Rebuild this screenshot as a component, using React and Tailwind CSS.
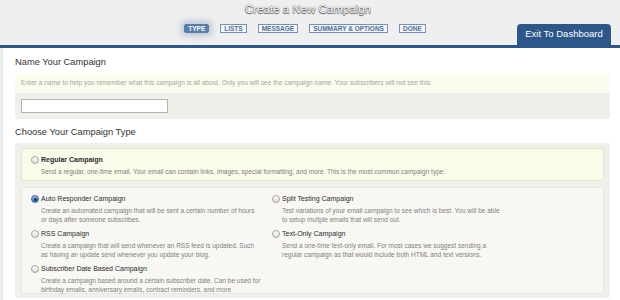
const font = { fontFamily: '"Liberation Sans", Arial, sans-serif' };

const tabs = ['TYPE', 'LISTS', 'MESSAGE', 'SUMMARY & OPTIONS', 'DONE'];

function Radio({ checked }) {
  if (checked) {
    return (
      <span className="mt-[1px] mr-[2px] flex h-[8px] w-[8px] shrink-0 items-center justify-center rounded-full border border-[#3f6aa6] bg-gradient-to-b from-[#8db5ea] to-[#3d78c9]">
        <span className="h-[3px] w-[3px] rounded-full bg-[#17335e]" />
      </span>
    );
  }
  return (
    <span className="mt-[1px] mr-[2px] h-[8px] w-[8px] shrink-0 rounded-full border border-[#a3a3a3] bg-gradient-to-b from-white to-[#dcdcdc]" />
  );
}

function Option({ title, lines, checked, bold }) {
  return (
    <div className="flex items-start">
      <Radio checked={checked} />
      <div>
        <div className={`text-[7px] leading-[10px] text-[#2b2b2b] ${bold ? 'font-bold' : ''}`}>{title}</div>
        <div className="mt-[2px] text-[6.5px] leading-[9px] text-[#7f7f7f]">
          {lines.map((l) => (
            <div key={l} className="whitespace-nowrap">{l}</div>
          ))}
        </div>
      </div>
    </div>
  );
}

export default function App() {
  return (
    <div className="w-[620px] h-[300px] overflow-hidden bg-white" style={font}>
      <div className="flex h-[45px] flex-col bg-[#efefef]">
        <div className="flex h-[20px] items-center justify-center pr-[4px]">
          <span className="text-[11.5px] text-white [text-shadow:0_1px_1px_#444,0_0_1px_#222]">
            Create a New Campaign
          </span>
        </div>
        <div className="relative flex flex-1 items-start justify-center pt-[4px] pr-[10px]">
          <div className="flex gap-[11px]">
            {tabs.map((t, i) => (
              <span
                key={t}
                className={
                  i === 0
                    ? 'flex h-[9px] items-center rounded-[2px] border border-[#5a7eaa] bg-[#5a7eaa] px-[3px] text-[6.5px] font-bold text-white shadow-[0_0_6px_3px_rgba(90,126,170,0.35)]'
                    : 'flex h-[9px] items-center border border-[#7390b6] bg-[#f5f7fa] px-[3px] text-[6.5px] font-bold text-[#4f709c]'
                }
              >
                {t}
              </span>
            ))}
          </div>
          <button className="absolute right-[9px] bottom-0 flex h-[21px] w-[94px] items-center justify-center rounded-t-[4px] bg-[#2d5689] text-[9.5px] text-white">
            Exit To Dashboard
          </button>
        </div>
      </div>
      <div className="h-[3px] bg-[#2d5689]" />

      <div className="border-l-[3px] border-[#ececec] pl-[12px] pr-[10px] pt-[7px] pb-[4px]">
        <h2 className="text-[9.3px] leading-[14px] text-[#333]">Name Your Campaign</h2>
        <div className="mt-[4px] overflow-hidden rounded-[3px]">
          <div className="flex h-[20px] items-center bg-[#fbfcee] px-[6px] text-[6.6px] text-[#a5a5a5]">
            Enter a name to help you remember what this campaign is all about. Only you will see the campaign name. Your subscribers will not see this.
          </div>
          <div className="h-[26px] bg-[#f0efe9] px-[6px] pt-[6px]">
            <input className="block h-[14px] w-[147px] border border-[#b3b3b3] bg-white outline-none" />
          </div>
        </div>

        <h2 className="mt-[6px] text-[9.3px] leading-[14px] text-[#333]">Choose Your Campaign Type</h2>
        <div className="mt-[4px] flex flex-col gap-[6px] rounded-[3px] bg-[#f0efe9] px-[6px] pt-[5px] pb-[4px]">
          <div className="h-[33px] rounded-[3px] border border-[#e2e7c4] bg-[#fafbe8] pl-[9px] pt-[6px]">
            <Option
              bold
              title="Regular Campaign"
              lines={[
                'Send a regular, one-time email. Your email can contain links, images, special formatting, and more. This is the most common campaign type.',
              ]}
            />
          </div>
          <div className="grid h-[107px] grid-cols-[241px_1fr] rounded-[3px] border border-[#e9e8e2] bg-[#f8f7f3] pl-[9px] pt-[6px]">
            <div className="flex flex-col gap-[5px]">
              <Option
                checked
                title="Auto Responder Campaign"
                lines={[
                  'Create an automated campaign that will be sent a certain number of hours',
                  'or days after someone subscribes.',
                ]}
              />
              <Option
                title="RSS Campaign"
                lines={[
                  'Create a campaign that will send whenever an RSS feed is updated. Such',
                  'as having an update send whenever you update your blog.',
                ]}
              />
              <Option
                title="Subscriber Date Based Campaign"
                lines={[
                  'Create a campaign based around a certain subscriber date. Can be used for',
                  'birthday emails, anniversary emails, contract reminders, and more.',
                ]}
              />
            </div>
            <div className="flex flex-col gap-[5px]">
              <Option
                title="Split Testing Campaign"
                lines={[
                  'Test variations of your email campaign to see which is best. You will be able',
                  'to setup multple emails that will send out.',
                ]}
              />
              <Option
                title="Text-Only Campaign"
                lines={[
                  'Send a one-time text-only email. For most cases we suggest sending a',
                  'regular campaign as that would include both HTML and text versions.',
                ]}
              />
            </div>
          </div>
        </div>
      </div>
    </div>
  );
}
